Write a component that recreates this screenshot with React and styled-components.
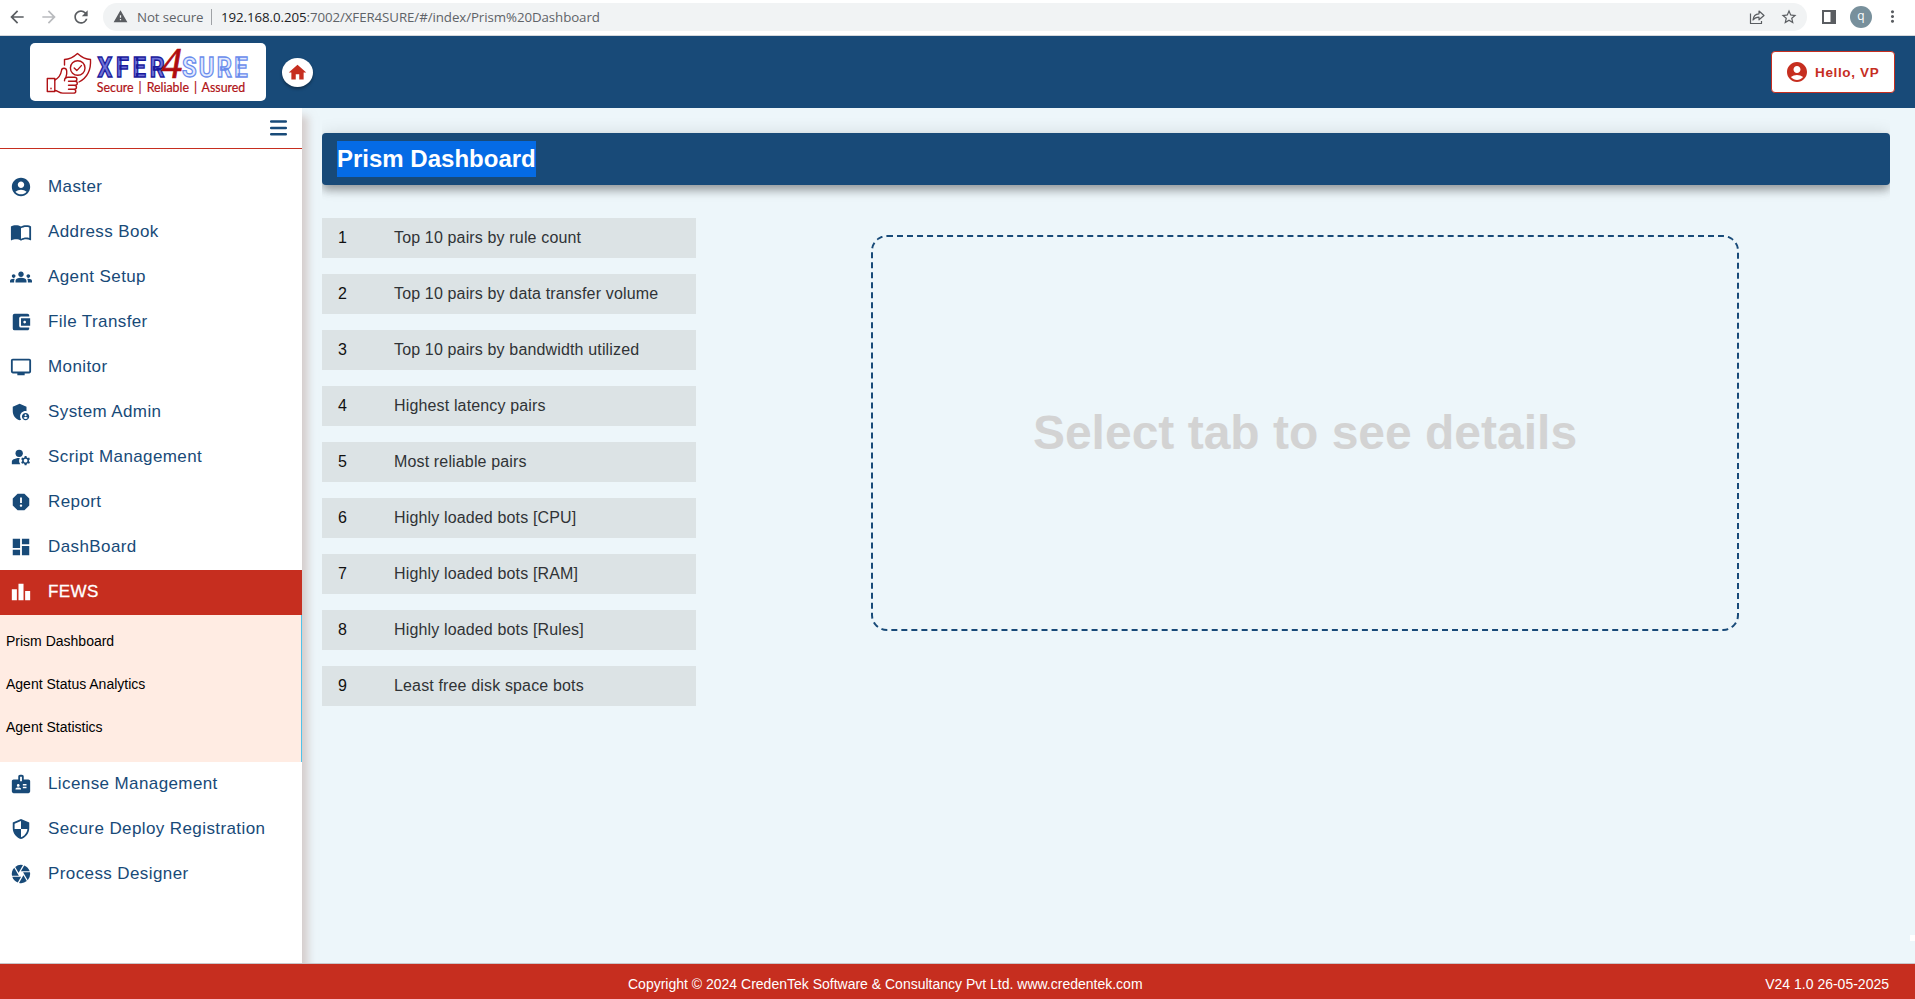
import React from "react";
import styled, { createGlobalStyle, css } from "styled-components";
import {
  MdArrowBack, MdArrowForward, MdRefresh, MdWarning, MdStarBorder, MdMoreVert, MdHome,
  MdAccountCircle, MdGroups, MdAccountBalanceWallet, MdPersonalVideo, MdAdminPanelSettings,
  MdManageAccounts, MdReport, MdDashboard, MdLeaderboard, MdBadge, MdSecurity, MdCamera,
} from "react-icons/md";

const navy = "#184a78";
const red = "#c62e1f";
const sans = `"Liberation Sans", Arial, sans-serif`;
const ui = `"Open Sans", "Noto Sans", sans-serif`;

const Global = createGlobalStyle`
  *, *::before, *::after { box-sizing: border-box; }
  body { margin: 0; font-family: ${sans}; background: #edf6fa; overflow: hidden; }
  svg { display: block; flex: none; overflow: visible; }
`;

const Page = styled.div`
  display: flex;
  flex-direction: column;
  height: 999px;
  position: relative;
`;

/* Browser toolbar */
const Toolbar = styled.div`
  display: flex;
  align-items: center;
  height: 36px;
  padding: 0 13px 2px 7px;
  background: #fff;
  border-bottom: 1px solid #d5d8dc;
  color: #5a5d61;
`;
const NavButtons = styled.div`
  display: flex;
  gap: 12px;
  width: 96px;
`;
const Faded = styled.span`
  color: #b9bbbe;
`;
const AddressBar = styled.div`
  flex: 1;
  display: flex;
  align-items: center;
  height: 28px;
  padding: 0 9px 0 10px;
  border-radius: 14px;
  background: #f1f3f4;
  font: 13.3px/28px ${ui};
  white-space: nowrap;
`;
const NotSecure = styled.span`
  width: 74px;
  margin-left: 9px;
  color: #5f6368;
  letter-spacing: -0.1px;
`;
const UrlText = styled.span`
  flex: 1;
  display: flex;
  align-items: center;
  color: #5f6368;
  letter-spacing: -0.08px;
  &::before {
    content: "";
    width: 1px;
    height: 16px;
    margin: 0 9px 0 0;
    background: #9fa2a6;
  }
  b { font-weight: 400; color: #202124; }
`;
const AddressIcons = styled.div`
  display: flex;
  align-items: center;
  gap: 15px;
`;
const ToolbarRight = styled.div`
  display: flex;
  align-items: center;
  justify-content: space-between;
  width: 80px;
  margin-left: 15px;
`;
const Avatar = styled.span`
  width: 22px;
  height: 22px;
  margin-left: 3px;
  border-radius: 50%;
  background: #78909c;
  color: #fff;
  font: 12px/20px ${ui};
  text-align: center;
`;

/* Application header */
const Header = styled.header`
  display: flex;
  align-items: center;
  height: 72px;
  padding: 0 20px 0 30px;
  background: ${navy};
  position: relative;
  z-index: 3;
`;
const LogoCard = styled.div`
  width: 236px;
  height: 58px;
  border-radius: 5px;
  background: #fff;
`;
const HomeButton = styled.div`
  display: flex;
  align-items: center;
  justify-content: center;
  width: 31px;
  height: 29px;
  margin-left: 16px;
  border-radius: 50%;
  background: #fff;
  color: ${red};
  box-shadow: 0 2px 3px rgba(0, 0, 0, 0.35);
`;
const UserButton = styled.div`
  display: flex;
  align-items: center;
  gap: 6px;
  width: 124px;
  height: 42px;
  margin-left: auto;
  padding-left: 13px;
  border: 1px solid ${red};
  border-radius: 4px;
  background: #fff;
  color: ${red};
  font-size: 13.5px;
  font-weight: 700;
  letter-spacing: 0.65px;
  white-space: nowrap;
`;

/* Body */
const Body = styled.div`
  display: flex;
  height: 855px;
`;
const Sidebar = styled.nav`
  width: 302px;
  background: #fff;
  position: relative;
  z-index: 2;
  box-shadow: 6px 8px 8px rgba(190, 165, 160, 0.5);
`;
const SidebarTop = styled.div`
  display: flex;
  justify-content: flex-end;
  height: 41px;
  padding: 12px 15px 0 0;
  border-bottom: 1px solid ${red};
  margin-bottom: 16px;
`;
const MenuItem = styled.div`
  display: flex;
  align-items: center;
  gap: 16px;
  height: 45px;
  padding: 0 0 2px 10px;
  color: ${navy};
  font-size: 17px;
  letter-spacing: 0.4px;
  line-height: 21px;
  white-space: nowrap;
  ${(p) => p.$active && css`
    background: ${red};
    color: #fff;
    -webkit-text-stroke: 0.3px #fff;
  `}
`;
const SubMenu = styled.div`
  height: 147px;
  padding: 5px 0 0 6px;
  background: #ffece3;
  border-right: 1px solid #4fc3ea;
`;
const SubItem = styled.div`
  height: 43px;
  color: #000;
  font-size: 14px;
  line-height: 43px;
`;

const Main = styled.main`
  flex: 1;
  padding: 0 25px 0 20px;
`;
const TitleClip = styled.div`
  padding: 25px 0 33px;
  overflow: hidden;
`;
const TitleBar = styled.div`
  height: 52px;
  padding: 8px 15px;
  border-radius: 4px;
  background: ${navy};
  box-shadow: 0 5px 8px -1px rgba(0, 0, 0, 0.22), 0 6px 10px rgba(0, 0, 0, 0.14), 0 1px 18px rgba(0, 0, 0, 0.12);
`;
const Title = styled.h1`
  display: inline-block;
  margin: 0;
  background: #056be5;
  color: #fff;
  font-size: 24px;
  line-height: 36px;
  vertical-align: top;
`;
const Columns = styled.div`
  display: flex;
`;
const TabList = styled.div`
  display: flex;
  flex-direction: column;
  gap: 16px;
  width: 374px;
`;
const Tab = styled.div`
  display: flex;
  height: 40px;
  padding-left: 16px;
  background: #dce3e5;
  color: #303336;
  font-size: 16px;
  line-height: 39px;
  letter-spacing: 0.15px;
`;
const TabNumber = styled.span`
  width: 56px;
  color: #111;
`;
const EmptyPanel = styled.div`
  display: flex;
  align-items: center;
  justify-content: center;
  width: 868px;
  height: 396px;
  margin: 17px 0 0 175px;
  padding-bottom: 2px;
  border: 2px dashed ${navy};
  border-radius: 16px;
  color: #d3d3d3;
  font-size: 48px;
  font-weight: 700;
  white-space: nowrap;
`;

const Footer = styled.footer`
  display: flex;
  justify-content: space-between;
  height: 36px;
  padding: 0 26px 0 628px;
  border-top: 1px solid #c9c6ca;
  background: ${red};
  color: #fff;
  font-size: 14px;
  line-height: 41px;
  white-space: nowrap;
  position: relative;
  z-index: 3;
`;
const EdgeHandle = styled.div`
  position: absolute;
  right: 0;
  top: 935px;
  width: 5px;
  height: 6px;
  background: #fff;
`;

const BookIcon = ({ size }) => (
  <svg width={size} height={size} viewBox="0 0 24 24" fill="currentColor">
    <path d="M21 5c-1.11-.35-2.33-.5-3.5-.5-1.95 0-4.05.4-5.5 1.5-1.45-1.1-3.55-1.5-5.5-1.5S2.45 4.9 1 6v14.65c0 .25.25.5.5.5.1 0 .15-.05.25-.05C3.1 20.45 5.05 20 6.5 20c1.95 0 4.05.4 5.5 1.5 1.35-.85 3.8-1.5 5.5-1.5 1.65 0 3.35.3 4.75 1.05.1.05.15.05.25.05.25 0 .5-.25.5-.5V6c-.6-.45-1.25-.75-2-1zm0 13.500c-1.100-.35-2.300-.5-3.500-.5-1.700 0-4.150.65-5.500 1.500V8c1.350-.85 3.800-1.500 5.500-1.500 1.200 0 2.400.15 3.500.5v11.500z" />
  </svg>
);

const Logo = () => (
  <svg width="236" height="58" viewBox="0 0 236 58">
    <g fill="none" stroke="#b01216" strokeWidth="1.4" strokeLinejoin="round" strokeLinecap="round">
      <path d="M34.500 22v-5.500c5-.3 9-2.300 13-6c4 3.700 8 5.700 13 6c.6 10-2 17.500-11.500 22.500" />
      <circle cx="47.700" cy="25" r="7.300" />
      <path d="M44.200 25l2.600 2.600l4.600-5" />
      <path d="M17.300 35.500h7.500v13h-7.500z" />
      <path d="M21 45.300v.4" />
      <path d="M24.800 37c4-2 6-5 6.700-9.500c.3-3 4.700-3 5.200.3c.4 3-.2 5-.9 7" />
      <path d="M24.800 47.500c3 0 4 2.600 8 2.600h10.500c3.300 0 3.300-3.900 0-3.900h-4.800h5.500c3.300 0 3.300-4 0-4h-5.500h6.300c3.300 0 3.300-4 0-4h-6.300h6c3.200 0 3.200-3.900 0-3.900h-6.500c-2.500 0-3.500 1.500-3.500 3.500" />
    </g>
    <g fontFamily="Roboto, sans-serif" fontSize="27" fontWeight="700">
      <text x="0" y="0" transform="translate(67.500 33.700) scale(0.86 1)" textLength="78" lengthAdjust="spacing" fill="#6f72d8" stroke="#1a1a9c" strokeWidth="1.400">XFER</text>
      <text x="0" y="0" transform="translate(152 33.700) scale(0.88 1)" textLength="74.500" lengthAdjust="spacing" fill="#e3ebff" stroke="#6a8cec" strokeWidth="1.300">SURE</text>
    </g>
    <text x="0" y="0" transform="translate(131.500 34.500) scale(0.93 1)" fill="#b00c10" stroke="#b00c10" strokeWidth="0.700" fontFamily='"Liberation Serif", serif' fontStyle="italic" fontSize="45">4</text>
    <text x="66.800" y="48.500" textLength="148.500" lengthAdjust="spacingAndGlyphs" fill="#b01216" stroke="#b01216" strokeWidth="0.200" fontFamily="Lato, sans-serif" fontSize="12.500" wordSpacing="1.800">Secure | Reliable | Assured</text>
  </svg>
);

const items = [
  ["Master", MdAccountCircle],
  ["Address Book", BookIcon],
  ["Agent Setup", MdGroups],
  ["File Transfer", MdAccountBalanceWallet],
  ["Monitor", MdPersonalVideo],
  ["System Admin", MdAdminPanelSettings],
  ["Script Management", MdManageAccounts],
  ["Report", MdReport],
  ["DashBoard", MdDashboard],
  ["FEWS", MdLeaderboard, ["Prism Dashboard", "Agent Status Analytics", "Agent Statistics"]],
  ["License Management", MdBadge],
  ["Secure Deploy Registration", MdSecurity],
  ["Process Designer", MdCamera],
];

const tabs = [
  "Top 10 pairs by rule count",
  "Top 10 pairs by data transfer volume",
  "Top 10 pairs by bandwidth utilized",
  "Highest latency pairs",
  "Most reliable pairs",
  "Highly loaded bots [CPU]",
  "Highly loaded bots [RAM]",
  "Highly loaded bots [Rules]",
  "Least free disk space bots",
];

export default function App() {
  return (
    <>
      <Global />
      <Page>
        <Toolbar>
          <NavButtons>
            <MdArrowBack size={20} />
            <Faded><MdArrowForward size={20} /></Faded>
            <MdRefresh size={20} />
          </NavButtons>
          <AddressBar>
            <MdWarning size={15} />
            <NotSecure>Not secure</NotSecure>
            <UrlText><span><b>192.168.0.205</b>:7002/XFER4SURE/#/index/Prism%20Dashboard</span></UrlText>
            <AddressIcons>
              <svg width="16" height="16" viewBox="0 0 16 16" fill="none" stroke="currentColor" strokeWidth="1.2" strokeLinejoin="round">
                <path d="M1.500 4.500v10h11v-2.500" />
                <path d="M4 11c.4-4 2.500-6 6-6.200V2l5 4.500l-5 4.300V8.200C7.300 8.200 5.500 9 4 11z" />
              </svg>
              <MdStarBorder size={18} />
            </AddressIcons>
          </AddressBar>
          <ToolbarRight>
            <svg width="14" height="14" viewBox="0 0 14 14">
              <path d="M1 1h12v12H1z" fill="none" stroke="currentColor" strokeWidth="2" />
              <path d="M8.500 1H13v12H8.500z" fill="currentColor" />
            </svg>
            <Avatar>q</Avatar>
            <MdMoreVert size={19} />
          </ToolbarRight>
        </Toolbar>

        <Header>
          <LogoCard><Logo /></LogoCard>
          <HomeButton><MdHome size={21} /></HomeButton>
          <UserButton><MdAccountCircle size={24} />Hello, VP</UserButton>
        </Header>

        <Body>
          <Sidebar>
            <SidebarTop>
              <svg width="17" height="16" viewBox="0 0 17 16" stroke={navy} strokeWidth="2.5" strokeLinecap="round">
                <path d="M1.200 1.600h14.600M1.200 8h14.600M1.200 14.300h14.600" />
              </svg>
            </SidebarTop>
            {items.map(([label, Icon, children]) => (
              <React.Fragment key={label}>
                <MenuItem $active={Boolean(children)}>
                  <Icon size={22} />
                  {label}
                </MenuItem>
                {children && (
                  <SubMenu>
                    {children.map((c) => <SubItem key={c}>{c}</SubItem>)}
                  </SubMenu>
                )}
              </React.Fragment>
            ))}
          </Sidebar>
          <Main>
            <TitleClip>
              <TitleBar><Title>Prism Dashboard</Title></TitleBar>
            </TitleClip>
            <Columns>
              <TabList>
                {tabs.map((t, i) => (
                  <Tab key={t}><TabNumber>{i + 1}</TabNumber>{t}</Tab>
                ))}
              </TabList>
              <EmptyPanel>Select tab to see details</EmptyPanel>
            </Columns>
          </Main>
        </Body>

        <Footer>
          <span>Copyright © 2024 CredenTek Software &amp; Consultancy Pvt Ltd. www.credentek.com</span>
          <span>V24 1.0 26-05-2025</span>
        </Footer>
        <EdgeHandle />
      </Page>
    </>
  );
}
